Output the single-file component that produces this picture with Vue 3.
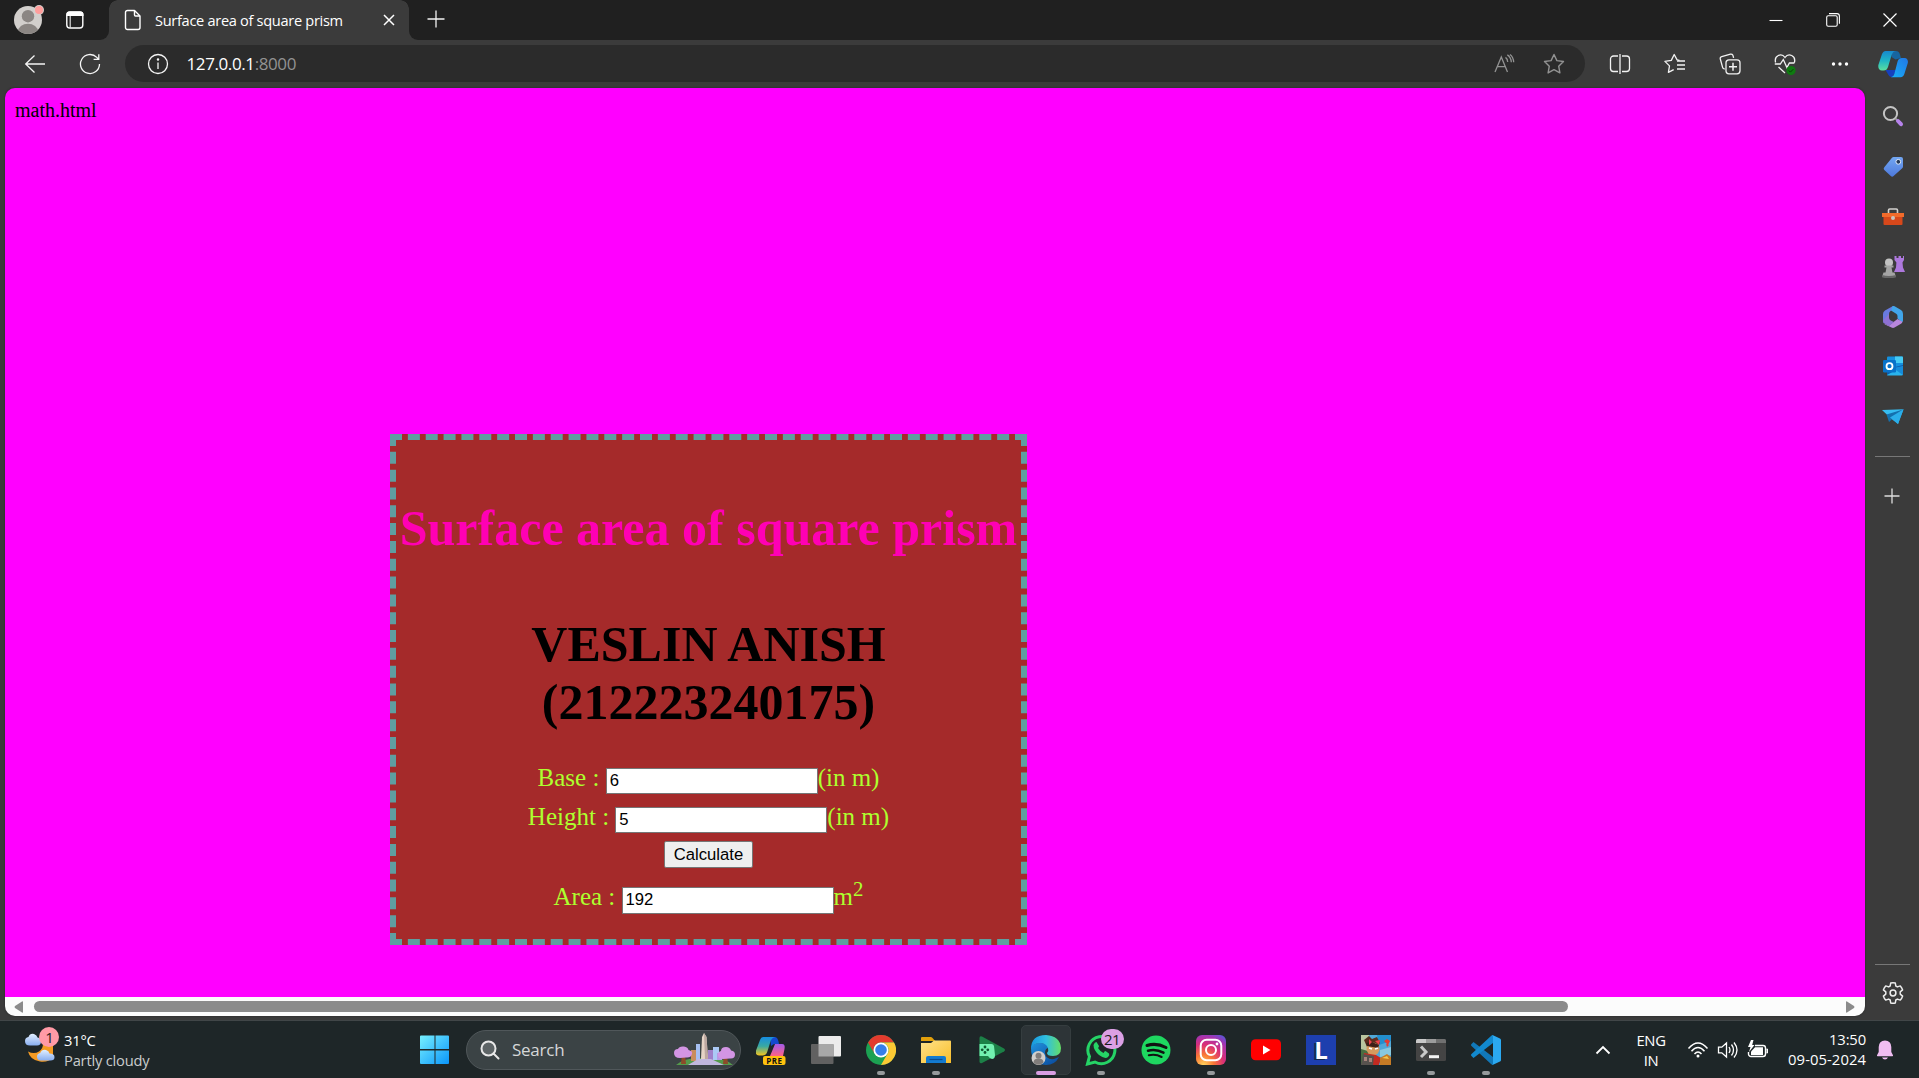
<script setup>
import { ref } from 'vue'

const base = ref('6')
const height = ref('5')
const area = ref('192')

function calculate() {
  const b = Number(base.value)
  const h = Number(height.value)
  area.value = String(2 * b * b + 4 * b * h)
}
</script>

<template>
  <div class="screen">
    <header class="titlebar">
      <div class="slot avatar">
        <svg width="32" height="32" viewBox="0 0 32 32">
          <defs><clipPath id="av"><circle cx="16" cy="16" r="14" /></clipPath></defs>
          <g clip-path="url(#av)">
            <rect width="32" height="32" fill="#d2cfcc" />
            <circle cx="16" cy="12.2" r="6.2" fill="#8b8683" />
            <ellipse cx="16" cy="27.5" rx="10" ry="7.8" fill="#8b8683" />
          </g>
          <circle cx="27" cy="6" r="5" fill="#d5d0cd" />
          <circle cx="27" cy="6" r="4" fill="#ff9d9b" />
        </svg>
      </div>
      <div class="slot workspace">
        <svg width="20" height="20" viewBox="0 0 20 20" fill="none">
          <rect x="1.8" y="2" width="16" height="16" rx="3" stroke="#fff" stroke-width="1.4" />
          <path d="M1.5 6V4.5A3 3 0 0 1 4.5 1.5h11a3 3 0 0 1 3 3V6z" fill="#fff" />
          <path d="M5.2 6v12" stroke="#ddd" stroke-width="1.2" />
        </svg>
      </div>
      <div class="tab">
        <svg class="page-icon" width="18" height="22" viewBox="0 0 18 22" fill="none" stroke="#fff" stroke-width="1.4" stroke-linejoin="round">
          <path d="M3.5 1.5h7l5.5 5.5v11.500a2 2 0 0 1-2 2H3.500a2 2 0 0 1-2-2V3.500a2 2 0 0 1 2-2z" />
          <path d="M10.500 1.500V6a1 1 0 0 0 1 1H16" />
        </svg>
        <span class="tab-title">Surface area of square prism</span>
        <svg width="12" height="12" viewBox="0 0 12 12" stroke="#fff" stroke-width="1.5"><path d="M1 1l10 10M11 1L1 11" /></svg>
      </div>
      <div class="slot new-tab">
        <svg width="18" height="18" viewBox="0 0 18 18" stroke="#f2f2f2" stroke-width="1.3"><path d="M9 .5v17M.5 9h17" /></svg>
      </div>
      <div class="window-controls">
        <svg width="14" height="14" viewBox="0 0 14 14" stroke="#fff" stroke-width="1.100"><path d="M.5 7.500h13" /></svg>
        <svg width="14" height="14" viewBox="0 0 14 14" fill="none" stroke="#fff" stroke-width="1.100"><rect x=".7" y="2.700" width="10.500" height="10.500" rx="1.500" /><path d="M3 .6h8a2.400 2.400 0 0 1 2.400 2.400v7.800" /></svg>
        <svg width="14" height="14" viewBox="0 0 14 14" stroke="#fff" stroke-width="1.200"><path d="M.5.5l13 13M13.500.5l-13 13" /></svg>
      </div>
    </header>

    <div class="toolbar">
      <div class="nav-slot back">
        <svg width="22" height="20" viewBox="0 0 22 20" fill="none" stroke="#f5f5f5" stroke-width="1.300"><path d="M21 10H2M10.500 1.500L1.700 10l8.800 8.500" /></svg>
      </div>
      <div class="nav-slot">
        <svg width="22" height="22" viewBox="0 0 22 22" fill="none" stroke="#f5f5f5" stroke-width="1.300"><path d="M20.500 11A9.500 9.500 0 1 1 17.800 4.400L19.500 6.300M19.800 1.200v5.200h-5.200" /></svg>
      </div>
      <div class="omnibox">
        <svg width="22" height="22" viewBox="0 0 22 22" fill="none" stroke="#f5f5f5" stroke-width="1.300"><circle cx="11" cy="11" r="9.500" /><path d="M11 9.500v6.500" /><circle cx="11" cy="6.500" r=".6" fill="#fff" /></svg>
        <span class="url">127.0.0.1<span class="port">:8000</span></span>
        <div class="omni-icons">
          <svg width="22" height="22" viewBox="0 0 22 22" fill="none" stroke="#929292" stroke-width="1.300"><path d="M2 19L8.300 4l6.200 15M4.200 13.700h8.200M12.500 4.400c1.300.9 2 2.400 2.200 4.600M14.300 1.900c2.800 1.600 3.800 4 4 7.400M17 1.500c2.400 1.800 3.500 4.500 3.700 7.800" /></svg>
          <svg width="22" height="22" viewBox="0 0 22 22" fill="none" stroke="#929292" stroke-width="1.400" stroke-linejoin="round"><path d="M11 1.500l2.900 6.100 6.600.9-4.800 4.700 1.200 6.700L11 16.700l-5.900 3.200 1.200-6.700L1.500 8.500l6.600-.9z" /></svg>
        </div>
      </div>
      <div class="actions">
        <div class="action">
          <svg width="22" height="22" viewBox="0 0 22 22" fill="none" stroke="#f2f2f2" stroke-width="1.300"><path d="M11 1v20M9 3H4.500A3 3 0 0 0 1.500 6v9.500a3 3 0 0 0 3 3H9M13 3h4.500a3 3 0 0 1 3 3v9.500a3 3 0 0 1-3 3H13" /></svg>
        </div>
        <div class="action">
          <svg width="22" height="22" viewBox="0 0 22 22" fill="none" stroke="#f2f2f2" stroke-width="1.300" stroke-linejoin="round"><path d="M15.500 7.300l-2.400-.4L10.200 1.500 7.300 7.400.9 8.400l4.600 4.500-1.100 6.500 5.300-2.700M13 8h8M13 12h8M13 16h8" /></svg>
        </div>
        <div class="action">
          <svg width="22" height="22" viewBox="0 0 22 22" fill="none" stroke="#f2f2f2" stroke-width="1.300"><path d="M14.600 4.800l-.6-2.200a2 2 0 0 0-2.500-1.400L2.700 3.600A2 2 0 0 0 1.300 6l2.300 8.300a2 2 0 0 0 2.200 1.500" /><rect x="7" y="6.800" width="14" height="14" rx="3" /><path d="M14 9.800v8M10 13.800h8" stroke-width="1.500" /></svg>
        </div>
        <div class="action">
          <svg width="22" height="22" viewBox="0 0 22 22" fill="none" stroke="#f2f2f2" stroke-width="1.300"><path d="M1.600 9.500C-.2 2.500 7.500-.5 11 4.500c3.500-5 11.200-2 9.400 5M.8 11h5.500l3-4.500 3.600 8 2.500-4.500h5M4.500 14l6.500 6" /><circle cx="17" cy="17.500" r="4.600" fill="#0f7b10" stroke="none" /><path d="M14.800 17.500l1.600 1.600 3-3" stroke="#073f07" stroke-width="1" /></svg>
        </div>
        <div class="action">
          <svg width="18" height="6" viewBox="0 0 18 6" fill="#fff"><circle cx="2.500" cy="3" r="1.700" /><circle cx="9" cy="3" r="1.700" /><circle cx="15.500" cy="3" r="1.700" /></svg>
        </div>
        <div class="action copilot-top">
          <svg width="30" height="28" viewBox="0 0 30 28">
            <defs>
              <linearGradient id="cpa" x1="0" y1="0" x2="0" y2="1"><stop offset="0" stop-color="#1788cd" /><stop offset=".5" stop-color="#1fb5c5" /><stop offset="1" stop-color="#5cdf9e" /></linearGradient>
              <linearGradient id="cpb" x1="1" y1="0" x2="0" y2="1"><stop offset="0" stop-color="#2177e5" /><stop offset="1" stop-color="#18aff8" /></linearGradient>
            </defs>
            <path d="M13.500 7l4 2.500L23 8c-.9-2.500-1-7-5-7h-4.500z" fill="#17659f" />
            <path d="M7.500 20l3 5c1 2 3 2.200 4 2.200l4-7.200z" fill="#1640bd" />
            <path d="M7.500 1H18c-3 0-4 3-5 6l-3 10c-.9 2.500-2 3.500-4.500 3.500H4c-3 0-4.300-3-3.500-6L4 4C5 2 6 1 7.500 1z" fill="url(#cpa)" />
            <path d="M22.500 27.200H13c2.200-.5 3-2.200 3.600-4.200L19.500 11.800c.8-2.700 2-3.800 4.500-3.800h2.500c3 0 3.800 3 3.300 5l-3.300 10.500c-.9 2.500-1.800 3.700-4 3.700z" fill="url(#cpb)" />
          </svg>
        </div>
      </div>
    </div>

    <div class="middle">
      <main class="viewport">
        <div class="page">
          <div class="note">math.html</div>
          <section class="card">
            <h1 class="heading">Surface area of square prism</h1>
            <h1 class="author">VESLIN ANISH<br />(212223240175)</h1>
            <div class="row row-base"><label>Base :&nbsp;</label><input v-model="base" /><span>(in m)</span></div>
            <div class="row row-height"><label>Height :&nbsp;</label><input v-model="height" /><span>(in m)</span></div>
            <div class="row row-button"><button @click="calculate">Calculate</button></div>
            <div class="row row-area"><label>Area :&nbsp;</label><input v-model="area" class="tall" /><span>m<sup>2</sup></span></div>
          </section>
        </div>
        <div class="scrollbar">
          <svg width="10" height="12" viewBox="0 0 10 12" fill="#8b8b8b"><path d="M9 1v10Q9 12 8 11.600L1 7Q0 6 1 5L8 .4Q9 0 9 1z" /></svg>
          <div class="thumb"></div>
          <svg class="right-arrow" width="10" height="12" viewBox="0 0 10 12" fill="#8b8b8b"><path d="M1 1v10q0 1 1 .6L9 7q1-1 0-2L2 .4Q1 0 1 1z" /></svg>
        </div>
      </main>

      <aside class="sidebar">
        <div class="side-item first-item">
          <svg width="24" height="24" viewBox="0 0 24 24" fill="none"><circle cx="9.500" cy="9.500" r="6.600" stroke="#c4c4c4" stroke-width="2" /><path d="M14.500 14.500l2 2" stroke="#999" stroke-width="1.800" /><path d="M17 17l3 3.200" stroke="#b783ec" stroke-width="4" stroke-linecap="round" /></svg>
        </div>
        <div class="side-item">
          <svg width="24" height="24" viewBox="0 0 24 24"><defs><linearGradient id="tg" x1="0" y1="0" x2="0" y2="1"><stop offset="0" stop-color="#73a7f2" /><stop offset="1" stop-color="#4d79dc" /></linearGradient></defs><path d="M12.500 2H20q2 0 2 2v7.500q0 1-.8 1.800L12.600 21q-1.400 1.300-2.800 0l-6.500-6q-1.300-1.400 0-2.800l7.700-9.400Q11.600 2 12.500 2z" fill="url(#tg)" /><circle cx="17.300" cy="6.800" r="2.400" fill="#263a59" stroke="#dfe9f7" stroke-width="1" /></svg>
        </div>
        <div class="side-item">
          <svg width="24" height="24" viewBox="0 0 24 24"><path d="M7.500 8V5.200q0-1.200 1.200-1.200h6.600q1.200 0 1.200 1.200V8" fill="none" stroke="#d3d1ce" stroke-width="1.600" /><rect x="2.500" y="9" width="19" height="11" rx="1" fill="#d7481b" /><path d="M1 8h22v4H1z" fill="#f16b2b" /><circle cx="12" cy="13" r="2" fill="#c9c4c0" /></svg>
        </div>
        <div class="side-item">
          <svg width="24" height="24" viewBox="0 0 24 24"><path d="M13.500 1h2v2h2V1h2.500v2h2V1h1v4l-1.500 2.500.5 5 2 4.500H13l2-4.500.4-5L13.500 5z" fill="#ad78dd" /><circle cx="8" cy="7.500" r="4" fill="#c2c2c2" /><path d="M3.500 10.500h9v2h-2l1 5h2l1.500 4.500q-7 1.500-14 0l1.500-4.500h2l1-5h-2z" fill="#a4a4a4" /><path d="M1 20q7 2 14 0v2.300q-7 1.500-14 0z" fill="#666" /></svg>
        </div>
        <div class="side-item">
          <svg width="24" height="24" viewBox="0 0 24 24"><path d="M12 1L4 5.500Q2 6.700 2 9v7q0 1.500 1 2.500l5-3.500V9q0-2 1.500-3l4-2.500V1.500Q13 .6 12 1z" fill="#687adf" /><path d="M11.500 1.200q1.300-.4 2.500.3l6 3.500q2 1.200 2 4v6.500q0 1.200-1 1.800l-4.500-3.800V11q0-1.500-1.300-2.300L10 5.500z" fill="#41a6ea" /><path d="M3 18.500l5 2 8.500-6.500 5 2.800q-.5 1.400-1.500 2l-6.500 3.700q-1.500.8-3 0L4 19.500z" fill="#b987dd" /><path d="M2 15.500q0 2 2 3.300l4 2.200 5-4-3.300-1.600Q8 14.500 8 12.500V9z" fill="#8e71d3" /></svg>
        </div>
        <div class="side-item">
          <svg width="24" height="24" viewBox="0 0 24 24"><rect x="6" y="1.500" width="16" height="12" rx="1" fill="#1490df" /><path d="M14 1.500h7a1 1 0 0 1 1 1V8h-8z" fill="#45cbf4" /><path d="M6 10l8 2 8-2v10H6z" fill="#0f5ba9" /><path d="M6 20l16-9v8q0 1.500-1.500 1.500h-13Q6 20.500 6 20z" fill="#29b3ed" /><path d="M12 13l10 7V11z" fill="#168bd9" /><rect x="2" y="5" width="13" height="12.500" rx="1.200" fill="#0872c9" /><circle cx="8.500" cy="11.200" r="3" fill="none" stroke="#fff" stroke-width="1.800" /></svg>
        </div>
        <div class="side-item">
          <svg width="24" height="24" viewBox="0 0 24 24"><path d="M1 5l21.500-.8L9 12.500z" fill="#36bdf1" /><path d="M9 12.500L22.500 4.200 17 19z" fill="#2bb0eb" /><path d="M5.500 9.500L8 17l3-2.800L22 4.500z" fill="#1470ae" /><path d="M9 12.500L22.500 4.200 17 19z" fill="#2aaeea" /></svg>
        </div>
        <div class="side-line first"></div>
        <svg class="side-plus" width="16" height="16" viewBox="0 0 16 16" stroke="#ddd" stroke-width="1.300"><path d="M8 .5v15M.5 8h15" /></svg>
        <div class="side-line last"></div>
        <svg class="gear" width="24" height="24" viewBox="0 0 24 24" fill="none" stroke="#eee" stroke-width="1.500" stroke-linejoin="round"><path d="M9.700 2q2.300-.5 4.600 0l.5 3 1.600.9 2.900-1q1.600 1.700 2.300 4l-2.400 2v2.200l2.400 2q-.7 2.300-2.300 4l-2.900-1-1.600.9-.5 3q-2.300.5-4.600 0l-.5-3-1.600-.9-2.900 1q-1.600-1.700-2.300-4l2.400-2v-2.200l-2.400-2q.7-2.300 2.300-4l2.900 1 1.600-.9z" /><circle cx="12" cy="12" r="2.900" /></svg>
      </aside>
    </div>

    <footer class="taskbar">
      <div class="weather">
        <svg width="36" height="36" viewBox="0 0 36 36">
          <defs><linearGradient id="cl" x1="0" y1="0" x2="0" y2="1"><stop offset="0" stop-color="#e1efff" /><stop offset="1" stop-color="#88aef0" /></linearGradient></defs>
          <path d="M30 19v12q-5 4.500-13 3.500Q7 33 5 24.500q6 3 11 0Q20 22 20 17z" fill="#f49b23" />
          <path d="M7 18.500q-5 0-5-4.500 0-3.500 3.500-4Q7 6 11 7q3 1 3.500 3.500Q18 11 18 14.500q0 4-4 4z" fill="url(#cl)" />
          <path d="M18 33.500q-4 0-4-4 0-3 3.200-3.500Q19 22 23 23q3 .8 3.500 3.500 5 0 5 3.700 0 3.300-4 3.300z" fill="url(#cl)" />
          <circle cx="26" cy="10" r="10" fill="#ff9aa6" />
          <text x="26.500" y="15.500" text-anchor="middle" font-size="15" fill="#222">1</text>
        </svg>
        <div class="weather-text"><span>31°C</span><span class="dim">Partly cloudy</span></div>
      </div>

      <svg class="start" width="30" height="30" viewBox="0 0 30 30"><defs><linearGradient id="win" x1="0" y1="0" x2="1" y2="1"><stop offset="0" stop-color="#77f0ff" /><stop offset="1" stop-color="#0a95fa" /></linearGradient></defs><path d="M1 .5h13.500V14H0V1.500Q0 .5 1 .5zM15.500.5H28q1 0 1 1V14H15.500zM0 15.500h14.500V29H1q-1 0-1-1zM15.500 15.500H29V28q0 1-1 1H15.500z" fill="url(#win)" /></svg>

      <div class="search">
        <svg width="20" height="20" viewBox="0 0 20 20" fill="none" stroke="#e8e8e8" stroke-width="2" stroke-linecap="round"><circle cx="8.500" cy="8.500" r="7" fill="#5d6466" /><path d="M13.500 13.500l5 5" /></svg>
        <span>Search</span>
        <svg class="city" width="64" height="34" viewBox="0 0 64 34">
          <path d="M4 32q8-7 23-7h12q14 0 22 7z" fill="#559b4c" />
          <path d="M19 17h6v11h-6z" fill="#c98d5a" /><path d="M24 11h4v16h-4z" fill="#a5bff0" />
          <path d="M36 17h5v10h-5z" fill="#a080ca" /><path d="M41 14h6v13h-6z" fill="#abc9f5" /><path d="M45 20h5v7h-5z" fill="#b59ae5" />
          <path d="M29 26L30 4l2-4 2.500 4L36 26z" fill="#e5d3c5" /><path d="M32 0l2.500 4L36 26h-3z" fill="#bca7a0" />
          <path d="M26 26h13l13 6H16z" fill="#c1b7de" />
          <path d="M10 21h3l1 10h-5zM52 21h3l1 10h-5z" fill="#8d4b29" />
          <path d="M8 25q-6 0-6-5 0-4 4-4 1-3 6-2.500 4 .5 4.500 3.500Q21 18 20 21q-1 4-6 3.500z" fill="#d395e4" />
          <path d="M51 26q-5 0-5-4.500 0-3 3-3.500 0-4 5-4 4 0 5 3.500 4 .5 4 4 0 4.500-5 4z" fill="#d395e4" />
        </svg>
      </div>

      <div class="apps">
        <div class="app">
          <svg width="30" height="30" viewBox="0 0 30 30"><defs><linearGradient id="cl1" x1="0" y1="0" x2="0" y2="1"><stop offset="0" stop-color="#168de1" /><stop offset=".5" stop-color="#39a9a2" /><stop offset="1" stop-color="#f6c51c" /></linearGradient><linearGradient id="cl2" x1="0" y1="0" x2="0" y2="1"><stop offset="0" stop-color="#a35be9" /><stop offset="1" stop-color="#ff6385" /></linearGradient></defs><path d="M14 2h5q3 0 4 7h-5l-3 2z" fill="#1549ce" /><path d="M7 2h12q-4 1-5 6l-2.500 8q-1 4.500-5.500 4.500H3q-4 0-3-5L4 5q1-3 3-3z" fill="url(#cl1)" /><path d="M19 9h7q3.500 0 2.500 5l-1.500 7H14q3-7 5-12z" fill="url(#cl2)" /><rect x="7" y="21" width="22.500" height="9" rx="2" fill="#ffc20e" /><text x="18.300" y="28.500" text-anchor="middle" font-size="8" font-weight="700" letter-spacing=".5" fill="#111">PRE</text></svg>
        </div>
        <div class="app">
          <svg width="30" height="30" viewBox="0 0 30 30"><rect x="7.500" y="1" width="22.500" height="20.500" rx="1" fill="#ececec" /><rect x="0" y="9" width="22.500" height="20" rx="1" fill="#616161" /><path d="M7.500 9h15v12.500h-15z" fill="#a8a8a8" /></svg>
        </div>
        <div class="app running">
          <svg width="30" height="30" viewBox="0 0 30 30"><circle cx="15" cy="15" r="15" fill="#1ca152" /><path d="M2 7.500A15 15 0 0 1 28 7.500H15a7.500 7.500 0 0 0-6.500 11.200z" fill="#e33b2e" /><path d="M28 7.500A15 15 0 0 1 15 30l6.500-11.200A7.500 7.500 0 0 0 15 7.500z" fill="#fcc934" /><circle cx="15" cy="15" r="7.500" fill="#fff" /><circle cx="15" cy="15" r="5.800" fill="#357fea" /></svg>
        </div>
        <div class="app running">
          <svg width="30" height="30" viewBox="0 0 30 30"><defs><linearGradient id="fo" x1="0" y1="0" x2="1" y2="1"><stop offset="0" stop-color="#ffe18a" /><stop offset="1" stop-color="#f9bf2a" /></linearGradient></defs><path d="M0 3q0-1 1-1h9q1 0 2 1.500l2 2.500H0z" fill="#e2a00b" /><path d="M0 8h10l3-2.500h16q1 0 1 1V28H0z" fill="url(#fo)" /><path d="M5 28v-5q0-2 2-2h16q2 0 2 2v5z" fill="#137bd0" /><path d="M8.500 24.500h13" stroke="#0a4c8f" stroke-width="1.200" /></svg>
        </div>
        <div class="app">
          <svg width="30" height="30" viewBox="0 0 30 30"><path d="M3.500 3q0-2.500 2.500-1.500l22 12q2 1.500 0 3L6 28q-2.500 1-2.500-1.500z" fill="#1c8047" /><path d="M3.500 9h12q2 0 2.500 2l1 9q0 4-3 4-2 0-4-3H3.500z" fill="#72f1b0" /><g fill="#115731"><circle cx="9" cy="12" r="1.400" /><circle cx="9" cy="17.500" r="1.400" /><circle cx="6.200" cy="14.800" r="1.400" /><circle cx="11.800" cy="14.800" r="1.400" /></g></svg>
        </div>
        <div class="app active">
          <svg width="32" height="32" viewBox="0 0 32 32"><defs><linearGradient id="e1" x1="0" y1="0" x2="1" y2="0"><stop offset="0" stop-color="#1696e1" /><stop offset=".5" stop-color="#30bfe0" /><stop offset="1" stop-color="#65df68" /></linearGradient><linearGradient id="e2" x1="0" y1="0" x2="1" y2="1"><stop offset="0" stop-color="#2093df" /><stop offset="1" stop-color="#09479a" /></linearGradient></defs><path d="M1 14q2 -5 9-5 8 0 9 5-4 0-4 5 1 7 9 6l5-2q-4 8-13 8Q1 30 1 14z" fill="url(#e2)" /><path d="M1 15Q1 1 16 1q14 1 15 13 0 8-8 8-6 0-6-3 2-2 1-5-2-5-8-5-7 0-9 6z" fill="url(#e1)" /><circle cx="8.500" cy="24" r="7" fill="#d2cfcc" /><circle cx="8.500" cy="21.700" r="3" fill="#817d7b" /><path d="M3.500 28.500q0-4 5-4t5 4q-5 4.500-10 0z" fill="#817d7b" /></svg>
        </div>
        <div class="app running">
          <svg width="32" height="32" viewBox="0 0 32 32" fill="none"><path d="M2.500 30l2-7.500A13.500 13.500 0 1 1 10 28z" stroke="#25d366" stroke-width="3" /><path d="M11.500 8q-2 0-3 3 0 5 5.500 10 6 4.500 9 2 2-2 1-3.500L20.500 17q-1 0-2 2-3-1-5.500-5 1-1 1-2z" fill="#25d366" /></svg>
          <span class="badge">21</span>
        </div>
        <div class="app">
          <svg width="30" height="30" viewBox="0 0 30 30" fill="none"><circle cx="15" cy="15" r="14.500" fill="#1ed760" /><path d="M6 10.500q9.500-3 19 2" stroke="#111" stroke-width="3" stroke-linecap="round" /><path d="M7 15.700q8-2.200 15.500 2" stroke="#111" stroke-width="2.500" stroke-linecap="round" /><path d="M7.800 20.300q7-1.500 12.800 1.700" stroke="#111" stroke-width="2" stroke-linecap="round" /></svg>
        </div>
        <div class="app running">
          <svg width="30" height="30" viewBox="0 0 30 30" fill="none"><defs><radialGradient id="ig" cx=".25" cy="1" r="1.150"><stop offset="0" stop-color="#ffd45d" /><stop offset=".3" stop-color="#f97735" /><stop offset=".6" stop-color="#d92e78" /><stop offset=".85" stop-color="#a234b2" /><stop offset="1" stop-color="#6253d3" /></radialGradient></defs><rect width="30" height="30" rx="6" fill="url(#ig)" /><rect x="4.700" y="4.700" width="20.600" height="20.600" rx="6" stroke="#fff" stroke-width="2" /><circle cx="15" cy="15" r="5" stroke="#fff" stroke-width="2" /><circle cx="21" cy="9" r="1.400" fill="#fff" /></svg>
        </div>
        <div class="app">
          <svg width="30" height="30" viewBox="0 0 30 30"><rect y="4.300" width="30" height="21" rx="4.500" fill="#f00" /><path d="M12 10.500v9l7.500-4.500z" fill="#fff" /></svg>
        </div>
        <div class="app">
          <div class="letter-tile">L</div>
        </div>
        <div class="app">
          <svg width="30" height="30" viewBox="0 0 30 30"><rect width="30" height="30" fill="#4fa8d8" /><path d="M16 0h14v6L18 10z" fill="#238fce" /><path d="M19 15l11-3v8l-11 2z" fill="#88c9df" /><path d="M0 0h8L6 18H0z" fill="#b9c59f" /><path d="M0 14l7 2 2 14H0z" fill="#496e41" /><path d="M3 5l5-4 3 3 5-2 3 6-3 4H6z" fill="#5b2c1d" /><circle cx="12" cy="14" r="6.500" fill="#d59a5e" /><path d="M5 8l6-1 7 3-1 3-11-2z" fill="#3d2018" /><path d="M8 4l3 3-3 3zM14 6l5-1-1 5z" fill="#ed4148" /><path d="M8 13l3 1M14 14l3-1" stroke="#fff" stroke-width="1.500" /><path d="M3 18l12 2 5 3-2 7H2z" fill="#c32a21" /><path d="M2 19l11 2-1 9H0z" fill="#57524e" /><path d="M3 22h3v4H3zM8 23h3v4H8z" fill="#a8847c" /><path d="M19 23l7-4 4 3v8H19z" fill="#c57b25" /><path d="M21 23l5-2 2 3z" fill="#f1c84e" /><path d="M23 6l3-2 3 2-2 4zM25 9l3 1-2 2z" fill="#e53b31" /></svg>
        </div>
        <div class="app running">
          <svg width="30" height="30" viewBox="0 0 30 30"><rect y="4" width="30" height="22" rx="1.500" fill="#444" /><path d="M1.500 4H10v4H0V5.500Q0 4 1.500 4z" fill="#c9c9c9" /><path d="M10 4h10v4H10z" fill="#9c9c9c" /><path d="M20 4h8.500Q30 4 30 5.500V8H20z" fill="#707070" /><path d="M5 11.500l5 5.500-5 5" fill="none" stroke="#c8c8c8" stroke-width="3" /><path d="M13 20.200h10v3H13z" fill="#f4f4f4" /></svg>
        </div>
        <div class="app running">
          <svg width="30" height="30" viewBox="0 0 30 30"><path d="M2.500 7L22 22v8q-1 0-2-1L.5 11q-1-1 0-2z" fill="#1178b9" /><path d="M2.500 23L22 8V0q-1 0-2 1L.5 19q-1 1 0 2z" fill="#1289ce" /><path d="M21.500 0L29 3.500Q30 4 30 5v20q0 1-1 1.500L21.500 30q.5-1 .5-2V2q0-1-.5-2z" fill="#2ba9f1" /></svg>
        </div>
      </div>

      <div class="tray">
        <svg class="chevron" width="16" height="10" viewBox="0 0 16 10" fill="none" stroke="#fff" stroke-width="1.800"><path d="M1.500 8.500L8 2l6.500 6.500" /></svg>
        <div class="lang"><span>ENG</span><span>IN</span></div>
        <svg class="wifi" width="22" height="18" viewBox="0 0 22 18" fill="none" stroke="#fff" stroke-width="1.500"><path d="M1.500 7.500q9.500-11 19 0M4.500 10.300q6.500-7.500 13 0M7.500 13q3.500-4 7 0" /><circle cx="11" cy="15" r="1.500" fill="#fff" stroke="none" /></svg>
        <svg class="speaker" width="22" height="18" viewBox="0 0 22 18" fill="none" stroke="#fff" stroke-width="1.300"><path d="M1.500 6.200h3.300L9.500 2v14l-4.700-4.200H1.500zM12 6q2 3 0 6M14.500 3.500q4 5.500 0 11M17 1.500q6 7.500 0 15" /></svg>
        <svg class="battery" width="22" height="20" viewBox="0 0 22 20" fill="none"><path d="M8 5.500h8a2.500 2.500 0 0 1 2.500 2.500v6a2.500 2.500 0 0 1-2.500 2.500H4A2.500 2.500 0 0 1 1.500 14v-2" stroke="#fff" stroke-width="1.400" /><path d="M8 7.200h8V15H4v-3.500z" fill="#fff" /><path d="M19.500 9h1v4h-1" fill="#fff" stroke="#fff" /><path d="M4 0L1 7h2.500L2 12l5.500-7H5.200L6.500 0z" fill="#fff" /></svg>
        <div class="clock"><span>13:50</span><span class="date">09-05-2024</span></div>
        <svg class="bell" width="18" height="20" viewBox="0 0 18 20" fill="#f0bdf2"><path d="M9 .5q6 0 6.300 6.500v5l1.700 3.300q.3 1-.7 1H1.700q-1 0-.7-1L2.700 12V7Q3 .5 9 .5zM6 17.500h6q-1 2-3 2t-3-2z" /></svg>
      </div>
    </footer>
  </div>
</template>

<style>
html,
body {
  margin: 0;
  overflow: hidden;
}
</style>

<style scoped>
.screen {
  width: 1919px;
  height: 1078px;
  display: flex;
  flex-direction: column;
  overflow: hidden;
  background: #3b3b3b;
  font-family: "Open Sans", "Noto Sans", sans-serif;
  color: #fff;
}
svg { display: block; flex: none; }

.titlebar { display: flex; height: 40px; flex: none; background: #3b3b3b; }
.slot { background: #202020; display: flex; align-items: center; height: 40px; box-sizing: border-box; flex: none; }
.avatar { width: 56px; padding-left: 12px; }
.workspace { width: 53px; padding-left: 9px; border-bottom-right-radius: 9px; }
.tab {
  width: 300px;
  height: 40px;
  box-sizing: border-box;
  padding: 0 14px 0 15px;
  display: flex;
  align-items: center;
  background: #3b3b3b;
  position: relative;
}
.tab::before,
.tab::after { content: ""; position: absolute; top: 0; width: 9px; height: 9px; z-index: 0; }
.tab::before { left: 0; background: radial-gradient(circle at 100% 100%, transparent 8.500px, #202020 9px); }
.tab::after { right: 0; background: radial-gradient(circle at 0 100%, transparent 8.500px, #202020 9px); }
.tab-title { margin-left: 13px; margin-top: -1px; width: 229px; font-size: 14.600px; letter-spacing: -0.310px; white-space: nowrap; }
.new-tab { flex: 1; padding-left: 17.500px; padding-bottom: 2px; border-bottom-left-radius: 9px; }
.window-controls { width: 150px; display: flex; align-items: center; gap: 43px; background: #202020; padding-bottom: 1px; box-sizing: border-box; }

.toolbar { height: 47px; padding-bottom: 1px; flex: none; display: flex; align-items: center; }
.nav-slot { width: 55px; display: flex; justify-content: center; }
.back { width: 70px; }
.nav-slot + .nav-slot { width: 40px; }
.nav-slot:nth-child(2) { margin-right: 15px; }
.omnibox { width: 1460px; height: 37px; box-sizing: border-box; border-radius: 19px; background: #2b2b2b; display: flex; align-items: center; padding: 0 20px 0 22px; flex: none; }
.url { margin-left: 17.500px; margin-top: -1px; font-size: 17px; letter-spacing: -0.400px; }
.port { color: #929292; }
.omni-icons { margin-left: auto; display: flex; gap: 28px; }
.actions { display: flex; align-items: center; margin-left: 7px; }
.action { width: 55px; display: flex; justify-content: center; }
.copilot-top { width: 52px; }

.middle { height: 932px; flex: none; display: flex; }
.viewport { margin-left: 5px; width: 1860px; height: 928px; display: flex; flex-direction: column; border-radius: 10px; overflow: hidden; flex: none; box-shadow: 0 0 2px #222; }
.page { height: 909px; flex: none; background: #f0f; font-family: "Liberation Serif", "Times New Roman", serif; color: #000; display: flow-root; }
.note { margin: 10px 0 0 10px; font-size: 20px; line-height: 24px; height: 23px; }
.card { margin: 313px 0 0 385px; width: 637px; height: 511px; box-sizing: border-box; border: 6px dashed #5f9ea0; background: #a52a2a; display: flow-root; text-align: center; color: #adff2f; font-size: 25px; }
.heading,
.author { font-size: 50px; line-height: 58px; font-weight: 700; white-space: nowrap; }
.heading { margin: 59px 0 0; color: #ff00b4; }
.author { margin: 58px 0 0; color: #000; }
.row { display: flex; justify-content: center; align-items: baseline; line-height: 29px; height: 39px; white-space: nowrap; }
.row-base { margin-top: 32px; }
.row input { width: 212px; height: 26px; box-sizing: border-box; padding: 1px 3px; border: 1.250px solid #767676; border-radius: 0; background: #fff; color: #000; font: 16.667px "Liberation Sans", Arial, sans-serif; outline: none; }
.row input.tall { height: 27px; }
.row-button { height: 41px; align-items: flex-start; }
.row button { width: 89px; height: 27px; padding: 0; border: 1px solid #767676; border-radius: 2px; background: #efefef; color: #000; font: 16.667px "Liberation Sans", Arial, sans-serif; }
sup { font-size: 20.800px; line-height: 0; }
.scrollbar { height: 19px; flex: none; background: #fcfcfc; display: flex; align-items: center; padding: 0 10px 0 9px; }
.thumb { width: 1534px; height: 11px; border-radius: 6px; background: #8b8b8b; margin-left: 10px; }
.right-arrow { margin-left: auto; }

.sidebar { flex: 1; display: flex; flex-direction: column; align-items: center; padding-top: 2px; padding-left: 1px; }
.side-item { height: 50px; display: flex; align-items: center; }
.side-item.first-item { height: 51.500px; }
.side-line { width: 35px; height: 1px; background: #777; flex: none; }
.side-line.first { margin-top: 14.500px; }
.side-plus { margin-top: 31px; margin-right: 1px; }
.side-line.last { margin-top: auto; }
.gear { margin: 16px 0 15px; }

.taskbar { height: 58px; box-sizing: border-box; border-top: 1px solid #414648; flex: none; background: #1e2628; display: flex; align-items: center; }
.weather { margin-left: 23px; width: 397px; display: flex; align-items: flex-start; height: 50px; }
.weather svg { margin-top: 2px; }
.weather-text { display: flex; flex-direction: column; margin-left: 5px; margin-top: 5px; font-size: 14.700px; line-height: 20px; letter-spacing: -0.200px; }
.dim { color: #c9cccd; }
.start { margin-top: 1px; }
.search { margin-left: 16px; width: 275px; height: 40px; box-sizing: border-box; flex: none; border: 1px solid #50575a; border-radius: 20px; background: #3b4345; display: flex; align-items: center; padding-left: 13px; font-size: 17px; color: #d5d7d8; letter-spacing: -0.250px; }
.search span { margin-left: 12px; }
.city { margin-left: auto; margin-right: 4px; }
.apps { display: flex; margin-left: 2.500px; }
.app { width: 55px; height: 56px; display: flex; align-items: center; justify-content: center; position: relative; flex: none; padding-top: 1px; box-sizing: border-box; }
.running::after,
.active::after { content: ""; position: absolute; bottom: 3px; left: 23.500px; width: 8px; height: 4px; border-radius: 2px; background: #969a9c; }
.active::before { content: ""; position: absolute; left: 2px; top: 3px; width: 50px; height: 50px; box-sizing: border-box; border-radius: 5px; background: #2d3437; border: 1px solid #353d3f; }
.active svg { position: relative; }
.active::after { left: 17.500px; width: 20px; background: #d99ee3; }
.badge { position: absolute; right: 5px; top: 7px; width: 23px; height: 20px; border-radius: 10px; background: #dba0e5; color: #1c1c1c; font-size: 15px; line-height: 20px; text-align: center; letter-spacing: -0.500px; }
.letter-tile { width: 30px; height: 30px; background: #1d3fae; font: 700 24px/29px "Open Sans", sans-serif; text-align: center; text-shadow: -2px 1px #12294d; }
.tray { margin-left: auto; width: 324px; height: 57px; display: flex; align-items: center; font-size: 14.800px; line-height: 20px; }
.lang { display: flex; flex-direction: column; align-items: center; width: 40px; margin-left: 20px; margin-top: 1px; letter-spacing: -0.300px; }
.wifi { margin-left: 16px; }
.speaker { margin-left: 8px; }
.battery { margin-left: 8px; }
.clock { width: 85px; margin-left: 12px; margin-top: -1px; display: flex; flex-direction: column; align-items: flex-end; letter-spacing: -0.150px; white-space: nowrap; }
.date { letter-spacing: 0.070px; }
.bell { margin-left: 10px; }
</style>
